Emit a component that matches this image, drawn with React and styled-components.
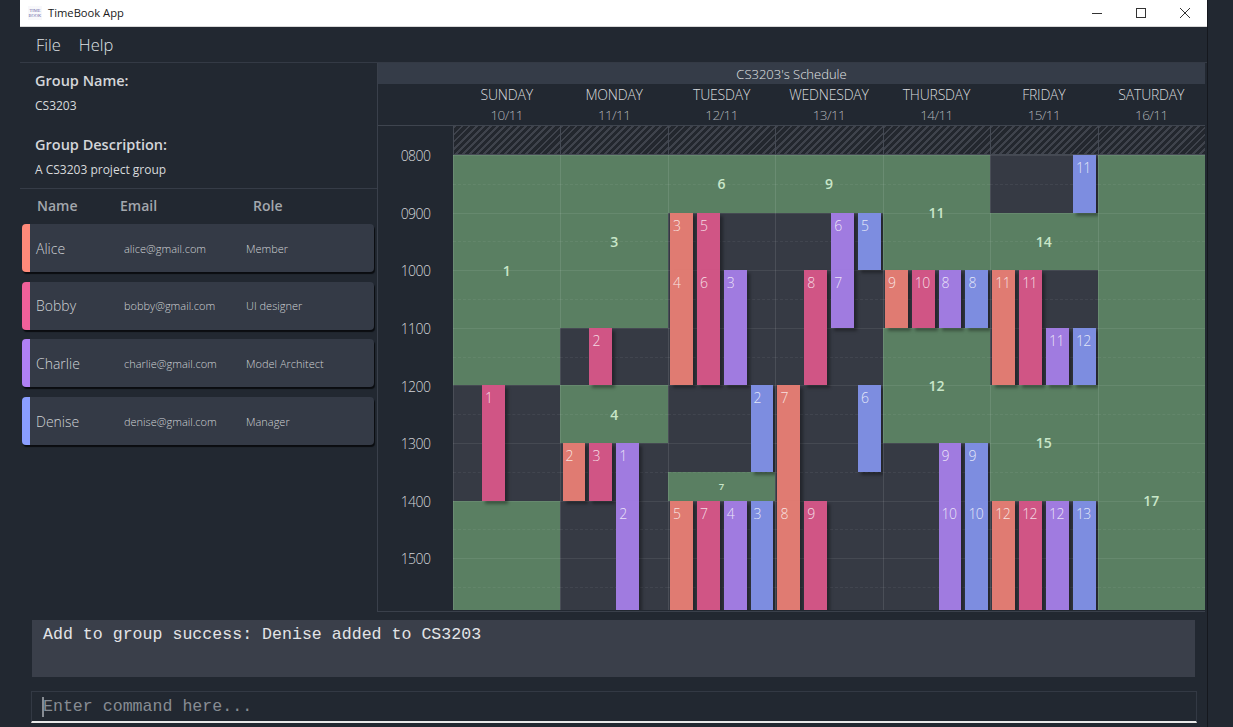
import styled, { createGlobalStyle } from "styled-components";

const FONT = `"Open Sans", "Noto Sans", "Liberation Sans", sans-serif`;
const LANES = ["#e07b72", "#d05585", "#a07be0", "#7d8de0"];
const STRIPES = ["#ff8a7a", "#f0609a", "#b080f5", "#8a9eff"];

const GlobalStyle = createGlobalStyle`
  html, body {
    margin: 0;
    height: 100%;
    background: #222831;
    overflow: hidden;
  }
`;

const Page = styled.div`
  width: 1233px;
  height: 727px;
  padding-left: 20px;
  box-sizing: border-box;
  font-family: ${FONT};
  color: #e4e6e8;
`;

const AppWindow = styled.div`
  width: 1187px;
  height: 727px;
  display: flex;
  flex-direction: column;
  background: #222831;
  border-right: 1px solid #15181e;
`;

const TitleBar = styled.div`
  height: 27px;
  background: #fff;
  display: flex;
  align-items: center;
  padding-left: 8px;
  border-bottom: 1px solid #d8d8d8;
  box-sizing: border-box;
`;

const Logo = styled.div`
  width: 14px;
  height: 14px;
  display: flex;
  flex-direction: column;
  justify-content: center;
  font-family: "Liberation Serif", serif;
  font-size: 4.5px;
  line-height: 5px;
  text-align: center;
  color: #6d6aa8;
  background: #f8f8fb;
`;

const AppTitle = styled.div`
  margin-left: 6px;
  padding-bottom: 1px;
  font-size: 11.2px;
  color: #1a1a1a;
  flex: 1;
`;

const WinButton = styled.div`
  width: 44px;
  height: 26px;
  display: flex;
  align-items: center;
  justify-content: center;
`;

const MenuBar = styled.div`
  height: 36px;
  box-sizing: border-box;
  display: flex;
  align-items: center;
  gap: 18px;
  padding-left: 16px;
  border-bottom: 1px solid #343a45;
  font-size: 16.5px;
  font-weight: 300;
  color: #dfe2e5;
`;

const Main = styled.div`
  display: flex;
  height: 549px;
`;

const SidePanel = styled.div`
  width: 357px;
  flex-shrink: 0;
`;

const GroupInfo = styled.div`
  height: 126px;
  box-sizing: border-box;
  padding: 7px 0 0 15px;
  border-bottom: 1px solid #363c47;
`;

const InfoLabel = styled.div`
  font-size: 14.5px;
  font-weight: 600;
  line-height: 22px;
  color: #d4d6d9;
`;

const InfoValue = styled.div`
  font-size: 12px;
  line-height: 16px;
  margin: 6px 0 20px;
  color: #d8dadc;
`;

const MemberRow = styled.div`
  display: grid;
  grid-template-columns: 88px 122px 1fr;
  align-items: center;
`;

const TableHead = styled(MemberRow)`
  height: 35px;
  box-sizing: border-box;
  padding: 0 0 2px 17px;
  grid-template-columns: 83px 133px 1fr;
  font-size: 14px;
  font-weight: 600;
  color: #a3a7ad;
`;

const MemberList = styled.div`
  display: flex;
  flex-direction: column;
  gap: 9.7px;
  padding: 0 3px 0 2px;
`;

const MemberCard = styled(MemberRow)`
  height: 48px;
  border-radius: 4px;
  background: #343a46;
  border-left: 8px solid ${(p) => p.$color};
  box-shadow: 1px 2px 1px #0a0c10;
  padding-left: 6px;
`;

const MemberName = styled.div`
  font-size: 14px;
  font-weight: 300;
  color: #d0d3d6;
`;

const MemberDetail = styled.div`
  font-size: 11px;
  font-weight: 300;
  color: #cfd2d5;
  white-space: nowrap;
`;

const SchedulePanel = styled.div`
  width: 828px;
  border: 1px solid #3a404b;
  border-width: 0 0 1px 1px;
  box-sizing: border-box;
`;

const ScheduleTitle = styled.div`
  height: 21px;
  background: #353c48;
  text-align: center;
  font-size: 13px;
  font-weight: 300;
  line-height: 22px;
  color: #e2e4e6;
`;

const WeekGrid = styled.div`
  display: grid;
  grid-template-columns: 75px repeat(7, 1fr);
`;

const WeekHead = styled(WeekGrid)`
  height: 42px;
  border-bottom: 1px solid #3f454f;
  box-sizing: border-box;
`;

const DayHead = styled.div`
  text-align: center;
  font-weight: 300;
  font-size: 14px;
  line-height: 21px;
  letter-spacing: -0.2px;
  color: #d8dadd;
  & > span {
    display: block;
    color: #aeb2b7;
    font-size: 13.5px;
    letter-spacing: -0.6px;
  }
`;

const TimeColumn = styled.div`
  display: flex;
  flex-direction: column;
  padding-top: 1px;
  background: #222831;
`;

const TimeCell = styled.div`
  height: 57.6px;
  flex-shrink: 0;
  display: flex;
  align-items: center;
  justify-content: center;
  font-size: 14px;
  font-weight: 300;
  letter-spacing: -0.6px;
  color: #d4d6d9;
`;

const DayColumn = styled.div`
  height: 484px;
  overflow: hidden;
`;

const Hatch = styled.div`
  height: 29px;
  box-sizing: border-box;
  border-left: 1px solid #454a54;
  border-bottom: 1px solid #454a54;
  background: repeating-linear-gradient(135deg, #3f434c 0 2px, #23272e 2px 5px);
`;

const Slots = styled.div`
  height: 455px;
  overflow: hidden;
  display: grid;
  grid-template-columns: repeat(4, 1fr);
  grid-template-rows: repeat(24, 28.8px);
  background: #363a44;
`;

const RowLine = styled.div`
  grid-column: 1 / -1;
  grid-row: ${(p) => p.$row};
  z-index: 1;
  border-top: 1px ${(p) => (p.$row % 2 ? "solid" : "dashed")} rgba(255, 255, 255, ${(p) => (p.$row % 2 ? 0.08 : 0.06)});
`;

const DayLine = styled.div`
  grid-column: 1 / -1;
  grid-row: 1 / -1;
  z-index: 1;
  border-left: 1px solid rgba(255, 255, 255, 0.1);
`;

const FreeSlot = styled.div`
  grid-column: 1 / -1;
  grid-row: ${(p) => p.$from} / ${(p) => p.$to};
  background: #5a7f62;
  display: flex;
  align-items: center;
  justify-content: center;
  font-size: ${(p) => (p.$small ? "9.5px" : "14px")};
  font-weight: 600;
  color: #c8e6c8;
`;

const BusySlot = styled.div`
  grid-column: ${(p) => p.$lane + 1};
  grid-row: ${(p) => p.$from} / ${(p) => p.$to};
  z-index: 2;
  margin: 0 1.8px 0 2.2px;
  padding: 1px 0 0 3px;
  background: ${(p) => LANES[p.$lane]};
  box-shadow: 3px 3px 3px rgba(0, 0, 0, 0.35);
  font-size: 14px;
  font-weight: 300;
  line-height: 24px;
  letter-spacing: -0.6px;
  color: rgba(255, 255, 255, 0.8);
`;

const ResultBox = styled.div`
  margin: 8px 0 0 12px;
  width: 1163px;
  height: 57px;
  box-sizing: border-box;
  padding: 4px 11px;
  background: #3a3f4a;
  font-family: "Liberation Mono", monospace;
  font-size: 16.6px;
  line-height: 21px;
  color: #e2e4e7;
`;

const CommandBox = styled.div`
  margin: 14px 0 0 11px;
  width: 1166px;
  height: 32px;
  box-sizing: border-box;
  display: flex;
  align-items: center;
  padding: 0 0 0 10px;
  border: 1px solid #333944;
  border-bottom: 2px solid #e8e8e8;
  font-family: "Liberation Mono", monospace;
  font-size: 16.6px;
  color: #878c93;
`;

const Caret = styled.div`
  width: 2px;
  height: 20px;
  margin-right: -1px;
  background: #878c93;
`;

const t = (hour) => (hour - 8) * 2 + 1;

const WEEK = [
  ["SUNDAY", "10/11", [["f", 8, 12, "1"], ["f", 14, 20, ""], [1, 12, 14, "1"]]],
  ["MONDAY", "11/11", [
    ["f", 8, 11, "3"], ["f", 12, 13, "4"],
    [1, 11, 12, "2"], [0, 13, 14, "2"], [1, 13, 14, "3"], [2, 13, 14, "1"], [2, 14, 20, "2"],
  ]],
  ["TUESDAY", "12/11", [
    ["f", 8, 9, "6"], ["f", 13.5, 14, "7", true],
    [0, 9, 10, "3"], [0, 10, 12, "4"], [1, 9, 10, "5"], [1, 10, 12, "6"], [2, 10, 12, "3"], [3, 12, 13.5, "2"],
    [0, 14, 20, "5"], [1, 14, 20, "7"], [2, 14, 20, "4"], [3, 14, 20, "3"],
  ]],
  ["WEDNESDAY", "13/11", [
    ["f", 8, 9, "9"],
    [0, 12, 14, "7"], [0, 14, 20, "8"], [1, 10, 12, "8"], [1, 14, 20, "9"],
    [2, 9, 10, "6"], [2, 10, 11, "7"], [3, 9, 10, "5"], [3, 12, 13.5, "6"],
  ]],
  ["THURSDAY", "14/11", [
    ["f", 8, 10, "11"], ["f", 11, 13, "12"],
    [0, 10, 11, "9"], [1, 10, 11, "10"], [2, 10, 11, "8"], [3, 10, 11, "8"],
    [2, 13, 14, "9"], [2, 14, 20, "10"], [3, 13, 14, "9"], [3, 14, 20, "10"],
  ]],
  ["FRIDAY", "15/11", [
    ["f", 9, 10, "14"], ["f", 12, 14, "15"],
    [3, 8, 9, "11"], [0, 10, 12, "11"], [1, 10, 12, "11"], [2, 11, 12, "11"], [3, 11, 12, "12"],
    [0, 14, 20, "12"], [1, 14, 20, "12"], [2, 14, 20, "12"], [3, 14, 20, "13"],
  ]],
  ["SATURDAY", "16/11", [["f", 8, 20, "17"]]],
];

const MEMBERS = [
  ["Alice", "alice@gmail.com", "Member"],
  ["Bobby", "bobby@gmail.com", "UI designer"],
  ["Charlie", "charlie@gmail.com", "Model Architect"],
  ["Denise", "denise@gmail.com", "Manager"],
];

const HOURS = ["0800", "0900", "1000", "1100", "1200", "1300", "1400", "1500"];

function Day({ slots }) {
  return (
    <DayColumn>
      <Hatch />
      <Slots>
        <DayLine />
        {Array.from({ length: 24 }, (_, i) => (
          <RowLine key={i} $row={i + 1} />
        ))}
        {slots.map(([lane, from, to, text, small]) =>
          lane === "f" ? (
            <FreeSlot key={from} $from={t(from)} $to={t(to)} $small={small}>
              {text}
            </FreeSlot>
          ) : (
            <BusySlot key={`${lane}-${from}`} $lane={lane} $from={t(from)} $to={t(to)}>
              {text}
            </BusySlot>
          )
        )}
      </Slots>
    </DayColumn>
  );
}

export default function App() {
  return (
    <Page>
      <GlobalStyle />
      <AppWindow>
        <TitleBar>
          <Logo>
            <div>TIME</div>
            <div>BOOK</div>
          </Logo>
          <AppTitle>TimeBook App</AppTitle>
          <WinButton>
            <svg width="10" height="10" viewBox="0 0 10 10">
              <path d="M0 5.5h10" stroke="#333" strokeWidth="1" />
            </svg>
          </WinButton>
          <WinButton>
            <svg width="10" height="10" viewBox="0 0 10 10">
              <rect x="0.5" y="0.5" width="9" height="9" fill="none" stroke="#333" />
            </svg>
          </WinButton>
          <WinButton>
            <svg width="10" height="10" viewBox="0 0 10 10">
              <path d="M0 0l10 10M10 0L0 10" stroke="#333" strokeWidth="1" />
            </svg>
          </WinButton>
        </TitleBar>
        <MenuBar>
          <div>File</div>
          <div>Help</div>
        </MenuBar>
        <Main>
          <SidePanel>
            <GroupInfo>
              <InfoLabel>Group Name:</InfoLabel>
              <InfoValue>CS3203</InfoValue>
              <InfoLabel>Group Description:</InfoLabel>
              <InfoValue>A CS3203 project group</InfoValue>
            </GroupInfo>
            <TableHead>
              <div>Name</div>
              <div>Email</div>
              <div>Role</div>
            </TableHead>
            <MemberList>
              {MEMBERS.map(([name, email, role], i) => (
                <MemberCard key={name} $color={STRIPES[i]}>
                  <MemberName>{name}</MemberName>
                  <MemberDetail>{email}</MemberDetail>
                  <MemberDetail>{role}</MemberDetail>
                </MemberCard>
              ))}
            </MemberList>
          </SidePanel>
          <SchedulePanel>
            <ScheduleTitle>CS3203's Schedule</ScheduleTitle>
            <WeekHead>
              <div />
              {WEEK.map(([day, date]) => (
                <DayHead key={day}>
                  {day}
                  <span>{date}</span>
                </DayHead>
              ))}
            </WeekHead>
            <WeekGrid>
              <TimeColumn>
                {HOURS.map((hour) => (
                  <TimeCell key={hour}>{hour}</TimeCell>
                ))}
              </TimeColumn>
              {WEEK.map(([day, , slots]) => (
                <Day key={day} slots={slots} />
              ))}
            </WeekGrid>
          </SchedulePanel>
        </Main>
        <ResultBox>Add to group success: Denise added to CS3203</ResultBox>
        <CommandBox>
          <Caret />
          Enter command here...
        </CommandBox>
      </AppWindow>
    </Page>
  );
}
